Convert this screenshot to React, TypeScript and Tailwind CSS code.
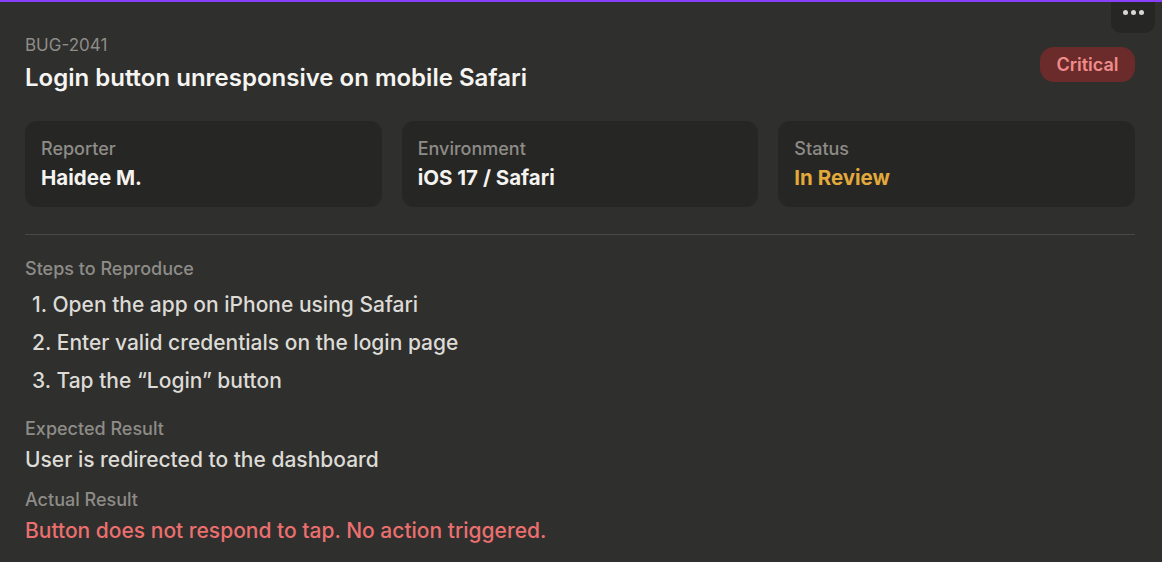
import React from "react";

const fields = [
  { label: "Reporter", value: "Haidee M.", tone: "text-[#f4f3ef]" },
  { label: "Environment", value: "iOS 17 / Safari", tone: "text-[#f4f3ef]" },
  { label: "Status", value: "In Review", tone: "text-[#e2a93b]" },
];

const steps = [
  "Open the app on iPhone using Safari",
  "Enter valid credentials on the login page",
  "Tap the \u201cLogin\u201d button",
];

export default function App() {
  return (
    <div
      className="relative min-h-[562px] bg-[#2f2f2e] border-t-2 border-[#8a3ffc] pl-[25px] pr-[27px] pt-[31px]"
      style={{ fontFamily: "Inter, 'Noto Sans', sans-serif" }}
    >
      {/* overflow menu */}
      <button className="absolute right-[7px] top-0 flex h-[31px] w-[44px] items-start justify-center gap-[3px] rounded-b-[10px] rounded-t-none bg-[#262625] pt-[8px]">
        <span className="h-[5px] w-[5px] rounded-full bg-[#d9d7d2]" />
        <span className="h-[5px] w-[5px] rounded-full bg-[#d9d7d2]" />
        <span className="h-[5px] w-[5px] rounded-full bg-[#d9d7d2]" />
      </button>

      <header className="flex items-start justify-between">
        <div>
          <div className="text-[17px] leading-6 text-[#8e8c87]">BUG-2041</div>
          <h1 className="mt-[5px] text-[24px] font-semibold leading-8 text-[#f6f5f1]">
            Login button unresponsive on mobile Safari
          </h1>
        </div>
        <span className="mt-[14px] flex h-[35px] w-[95px] items-center justify-center rounded-[14px] bg-[#6b2b2a] text-[18px] font-semibold text-[#f08c8a]">
          Critical
        </span>
      </header>

      <div className="mt-[27px] grid grid-cols-3 gap-[20px]">
        {fields.map((f) => (
          <div key={f.label} className="rounded-[12px] bg-[#262625] pl-4 pt-4 pb-[15px]">
            <div className="text-[18px] font-medium leading-6 text-[#8e8c87]">{f.label}</div>
            <div className={`mt-[3px] text-[20.5px] font-bold leading-7 ${f.tone}`}>{f.value}</div>
          </div>
        ))}
      </div>

      <div className="mt-[27px] h-px bg-[#4a4947]" />

      <section className="mt-[22px]">
        <div className="text-[18px] font-medium leading-6 text-[#8e8c87]">Steps to Reproduce</div>
        <div className="mt-[5px] pl-[7px]">
          {steps.map((s, i) => (
            <div key={i} className="text-[21px] font-medium leading-[38px] text-[#dddbd5]">
              {i + 1}. {s}
            </div>
          ))}
        </div>
      </section>

      <section className="mt-[17px]">
        <div className="text-[18px] font-medium leading-6 text-[#8e8c87]">Expected Result</div>
        <div className="mt-1 text-[21px] font-medium leading-[30px] text-[#dddbd5]">
          User is redirected to the dashboard
        </div>
      </section>

      <section className="mt-[13px]">
        <div className="text-[18px] font-medium leading-6 text-[#8e8c87]">Actual Result</div>
        <div className="mt-1 text-[21px] font-medium leading-[30px] text-[#ec6f6e]">
          Button does not respond to tap. No action triggered.
        </div>
      </section>
    </div>
  );
}
